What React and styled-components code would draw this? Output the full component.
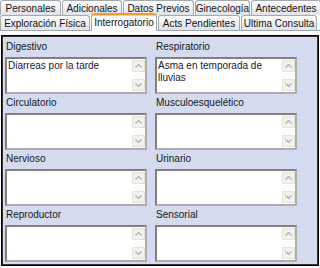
import styled, { createGlobalStyle, css } from 'styled-components';

const GlobalStyle = createGlobalStyle`
  html, body {
    margin: 0;
    padding: 0;
    background: #ffffff;
  }
  body {
    font-family: "Liberation Sans", Arial, sans-serif;
    font-size: 10px;
  }
`;

const Frame = styled.div`
  width: 320px;
  height: 268px;
  overflow: hidden;
  display: flex;
  flex-direction: column;
  background: #ffffff;
`;

const TabRow = styled.div`
  display: flex;
  gap: 1px;
  height: 15px;
  flex: none;
  position: relative;
  z-index: ${(p) => (p.$front ? 2 : 1)};
`;

const Tab = styled.div`
  width: ${(p) => p.$w}px;
  flex: none;
  box-sizing: border-box;
  display: flex;
  align-items: center;
  justify-content: center;
  white-space: nowrap;
  font-size: 10px;
  color: #141414;
  border: 1px solid #a4a9b0;
  border-bottom: none;
  border-radius: 3px 3px 0 0;
  background: linear-gradient(#fefefe, #eaecf0 60%, #dfe2e7);

  ${(p) =>
    p.$active &&
    css`
      height: 18px;
      margin-top: -2px;
      padding-bottom: 2px;
      background: #fcfcfe;
      border-top: 2px solid #ee9b34;
      box-shadow: inset 0 1px 0 #ffcb74;
      position: relative;
      z-index: 3;
    `}
`;

const Page = styled.div`
  flex: 1;
  display: flex;
  box-sizing: border-box;
  border-top: 1px solid #a0a6ae;
  background: #fcfcfe;
  padding: 4px 1px 2px 1px;
`;

const Panel = styled.div`
  flex: 1;
  display: grid;
  grid-template-columns: 142px 142px;
  column-gap: 8px;
  row-gap: 1px;
  align-content: start;
  padding: 3px 0 0 3px;
  border: 1px solid #000000;
  box-shadow: inset 0 0 0 1px #333333;
  background: #d4dbef;
`;

const Field = styled.div`
  display: flex;
  flex-direction: column;
`;

const Label = styled.div`
  height: 18px;
  box-sizing: border-box;
  padding: 2px 0 0 1px;
  line-height: 12px;
  font-size: 10px;
  color: #161616;
`;

const TextBox = styled.div`
  height: 37px;
  box-sizing: border-box;
  display: flex;
  background: #ffffff;
  border: 2px solid;
  border-color: #808080 #adadad #adadad #808080;
`;

const Content = styled.div`
  flex: 1;
  padding: 1px 2px 0 1px;
  font-size: 10px;
  line-height: 12px;
  color: #1d1733;
  overflow: hidden;
`;

const ScrollBar = styled.div`
  width: 13px;
  flex: none;
  box-sizing: border-box;
  display: flex;
  flex-direction: column;
  justify-content: space-between;
  padding: 1px 0;
  background: #fdfdfb;
`;

const ArrowButton = styled.div`
  height: 12px;
  box-sizing: border-box;
  display: flex;
  align-items: center;
  justify-content: center;
  border: 1px solid #e4e3da;
  border-radius: 1px;
  background: #f3f2ea;
`;

const Chevron = ({ down }) => (
  <svg width="7" height="4" viewBox="0 0 7 4">
    <polyline
      points={down ? '0.5,0.5 3.5,3.5 6.5,0.5' : '0.5,3.5 3.5,0.5 6.5,3.5'}
      fill="none"
      stroke="#b0b0b0"
      strokeWidth="1.2"
    />
  </svg>
);

const backTabs = [
  ['Personales', 61],
  ['Adicionales', 60],
  ['Datos Previos', 71],
  ['Ginecología', 55],
  ['Antecedentes', 70],
];

const frontTabs = [
  ['Exploración Física', 90],
  ['Interrogatorio', 66],
  ['Acts Pendientes', 82],
  ['Ultima Consulta', 76],
];

const fields = [
  ['Digestivo', 'Diarreas por la tarde'],
  ['Respiratorio', 'Asma en temporada de lluvias'],
  ['Circulatorio', ''],
  ['Musculoesquelético', ''],
  ['Nervioso', ''],
  ['Urinario', ''],
  ['Reproductor', ''],
  ['Sensorial', ''],
];

function App() {
  return (
    <Frame>
      <GlobalStyle />

      <TabRow>
        {backTabs.map(([name, w]) => (
          <Tab key={name} $w={w}>{name}</Tab>
        ))}
      </TabRow>
      <TabRow $front>
        {frontTabs.map(([name, w]) => (
          <Tab key={name} $w={w} $active={name === 'Interrogatorio'}>{name}</Tab>
        ))}
      </TabRow>

      <Page>
        <Panel>
          {fields.map(([label, value]) => (
            <Field key={label}>
              <Label>{label}</Label>
              <TextBox>
                <Content>{value}</Content>
                <ScrollBar>
                  <ArrowButton><Chevron /></ArrowButton>
                  <ArrowButton><Chevron down /></ArrowButton>
                </ScrollBar>
              </TextBox>
            </Field>
          ))}
        </Panel>
      </Page>
    </Frame>
  );
}

export default App;
